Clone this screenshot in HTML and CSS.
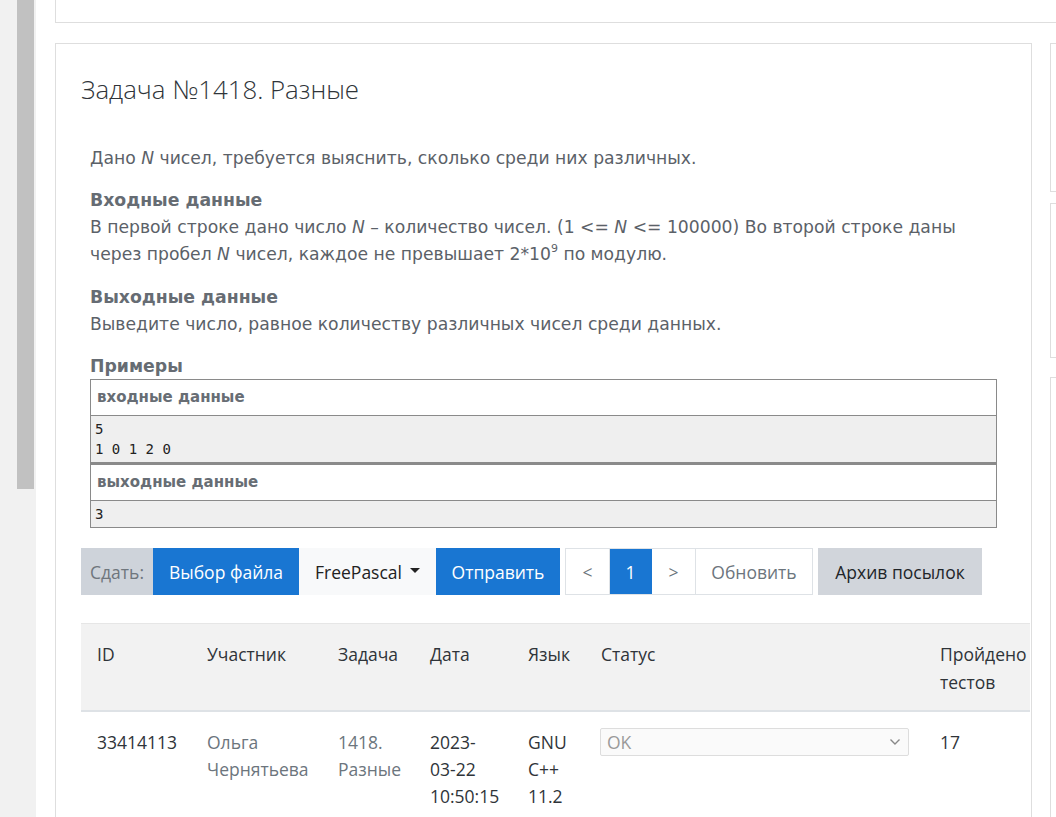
FILE: index.html
```html
<!DOCTYPE html>
<html lang="ru">
<head>
<meta charset="utf-8">
<title>Задача №1418. Разные</title>
<link rel="stylesheet" href="styles.css">
</head>
<body>
<div class="page">
  <aside class="scroller"><div class="thumb"></div></aside>
  <main class="main">
    <div class="card card-top"></div>
    <div class="row">
      <section class="card card-problem">
        <h1 class="title">Задача №1418. Разные</h1>
        <div class="statement">
          <p class="legend">Дано <i>N</i> чисел, требуется выяснить, сколько среди них различных.</p>
          <h3 class="sub">Входные данные</h3>
          <p class="para">В первой строке дано число <i>N</i> – количество чисел. (1 &lt;= <i>N</i> &lt;= 100000) Во второй строке даны через пробел <i>N</i> чисел, каждое не превышает 2*10<sup>9</sup> по модулю.</p>
          <h3 class="sub">Выходные данные</h3>
          <p class="para">Выведите число, равное количеству различных чисел среди данных.</p>
          <h3 class="sub sub-ex">Примеры</h3>
          <div class="sample">
            <div class="sample-head">входные данные</div>
            <pre class="sample-pre">5
1 0 1 2 0</pre>
          </div>
          <div class="sample">
            <div class="sample-head">выходные данные</div>
            <pre class="sample-pre">3</pre>
          </div>
        </div>
        <div class="toolbar">
          <div class="group">
            <span class="btn btn-label">Сдать:</span>
            <span class="btn btn-blue">Выбор файла</span>
            <span class="btn btn-light">FreePascal <span class="caret"></span></span>
            <span class="btn btn-blue btn-send">Отправить</span>
          </div>
          <div class="pager">
            <span class="pg">&lt;</span>
            <span class="pg pg-active">1</span>
            <span class="pg">&gt;</span>
            <span class="pg pg-refresh">Обновить</span>
          </div>
          <span class="btn btn-gray">Архив посылок</span>
        </div>
        <table class="runs">
          <colgroup>
            <col class="c-id"><col class="c-user"><col class="c-task"><col class="c-date"><col class="c-lang"><col class="c-status"><col class="c-tests">
          </colgroup>
          <thead>
            <tr><th>ID</th><th>Участник</th><th>Задача</th><th>Дата</th><th>Язык</th><th>Статус</th><th>Пройдено тестов</th></tr>
          </thead>
          <tbody>
            <tr>
              <td class="dark">33414113</td>
              <td class="muted">Ольга Чернятьева</td>
              <td class="muted">1418. Разные</td>
              <td class="dark">2023-<br>03-22<br>10:50:15</td>
              <td class="dark">GNU C++ 11.2</td>
              <td class="status"><div class="select"><span>OK</span><svg class="chev" width="12" height="8" viewBox="0 0 12 8"><path d="M1.5 1.5 L6 6 L10.5 1.5" fill="none" stroke="#888" stroke-width="1.4"/></svg></div></td>
              <td class="dark">17</td>
            </tr>
          </tbody>
        </table>
      </section>
      <div class="side">
        <div class="card side-card side-1"></div>
        <div class="card side-card side-2"></div>
        <div class="card side-card side-3"></div>
      </div>
    </div>
  </main>
</div>
</body>
</html>
```

FILE: styles.css
```css
html, body {
  margin: 0;
  padding: 0;
  height: 100%;
  overflow: hidden;
  background: #fff;
}
.page {
  display: flex;
  height: 817px;
  font-family: "Open Sans", "Noto Sans", sans-serif;
}
.scroller {
  width: 36px;
  flex: 0 0 36px;
  background: #f1f1f1;
}
.thumb {
  margin-left: 17px;
  width: 17px;
  height: 489px;
  background: #c1c1c1;
}
.main {
  flex: 1;
  padding-left: 19px;
  display: flex;
  flex-direction: column;
  gap: 20px;
  min-width: 0;
}
.card {
  border: 1px solid #dedede;
  background: #fff;
  box-sizing: border-box;
}
.card-top {
  border-top: none;
  border-right: none;
  height: 23px;
  flex: 0 0 23px;
}
.row {
  display: flex;
  gap: 18px;
  align-items: flex-start;
}
.card-problem {
  width: 977px;
  flex: 0 0 977px;
  height: 800px;
  padding: 28px 0 0 25px;
}
.side {
  flex: 1;
  display: flex;
  flex-direction: column;
}
.side-card { border-right: none; }
.side-1 { height: 149px; }
.side-2 { height: 155px; margin-top: 11px; }
.side-3 { height: 500px; margin-top: 19px; }

.title {
  margin: 0;
  font-weight: 300;
  font-size: 25.8px;
  line-height: 34px;
  color: #2f3439;
}
.statement {
  margin: 39px 0 0 9px;
  width: 907px;
  font-family: "DejaVu Sans", Verdana, sans-serif;
  color: #5b6168;
  font-size: 17.2px;
}
.legend {
  margin: 0 0 15px;
  line-height: 27px;
}
.para {
  margin: 0;
  line-height: 27px;
}
.sub {
  margin: 0;
  font-size: 17.3px;
  font-weight: bold;
  line-height: 27px;
  color: #666c73;
}
.para + .sub { margin-top: 16px; }
.sub-ex { margin-top: 16px; line-height: 25px; }
sup { font-size: 11px; line-height: 0; vertical-align: 8px; }
.sample {
  border: 1px solid #8a8a8a;
}
.sample + .sample { border-top-width: 2px; }
.sample-head {
  font-weight: bold;
  font-size: 15px;
  color: #676d74;
  padding: 0 6px;
  line-height: 35px;
  border-bottom: 1px solid #8a8a8a;
}
.sample-pre {
  margin: 0;
  background: #efefef;
  font-family: "DejaVu Sans Mono", "Liberation Mono", monospace;
  font-size: 14px;
  line-height: 20px;
  padding: 3px 4px 3px;
  color: #222;
}

.toolbar {
  display: flex;
  margin-top: 20px;
  gap: 5px;
  font-size: 17.5px;
}
.group { display: flex; }
.btn {
  display: flex;
  align-items: center;
  justify-content: center;
  height: 47px;
  box-sizing: border-box;
}
.btn-label { width: 72px; background: #ced3da; color: #6f767d; }
.btn-blue { width: 146px; background: #1976d2; color: #fff; }
.btn-send { width: 124px; }
.btn-light { width: 137px; background: #f8f9fa; color: #222; gap: 8px; }
.caret {
  width: 0; height: 0;
  border-left: 5px solid transparent;
  border-right: 5px solid transparent;
  border-top: 5px solid #222;
  margin-top: -3px;
}
.pager {
  display: flex;
  border: 1px solid #dee2e6;
  height: 47px;
  box-sizing: border-box;
}
.pg {
  display: flex;
  align-items: center;
  justify-content: center;
  width: 43px;
  color: #6c757d;
  border-right: 1px solid #dee2e6;
}
.pg-active { width: 41px; background: #1976d2; color: #fff; border-right-color: #1976d2; }
.pg-refresh { width: 116px; border-right: none; }
.btn-gray { width: 164px; background: #d1d5db; color: #212529; }

.runs {
  margin-top: 28px;
  width: 949px;
  border-collapse: collapse;
  table-layout: fixed;
  font-size: 17.5px;
}
.c-id { width: 110px; }
.c-user { width: 131px; }
.c-task { width: 92px; }
.c-date { width: 98px; }
.c-lang { width: 73px; }
.c-status { width: 339px; }
.c-tests { width: 106px; }
.runs th {
  background: #f2f2f2;
  font-weight: normal;
  text-align: left;
  vertical-align: top;
  color: #2f3439;
  padding: 16px 0 14px 16px;
  line-height: 28px;
  border-top: 1px solid #e6e6e6;
  border-bottom: 2px solid #dee2e6;
}
.runs td {
  vertical-align: top;
  padding: 17px 0 16px 16px;
  line-height: 27px;
}
.runs td.status { padding-left: 15px; padding-right: 15px; }
.dark { color: #2f3439; }
.muted { color: #6c757d; }
.select {
  display: flex;
  align-items: center;
  justify-content: space-between;
  height: 28px;
  box-sizing: border-box;
  border: 1px solid #dddddd;
  border-radius: 2px;
  background: #fafafa;
  padding: 0 7px 0 6px;
  color: #9a9a9a;
  margin-top: -1px;
}
.chev { display: block; }
```
